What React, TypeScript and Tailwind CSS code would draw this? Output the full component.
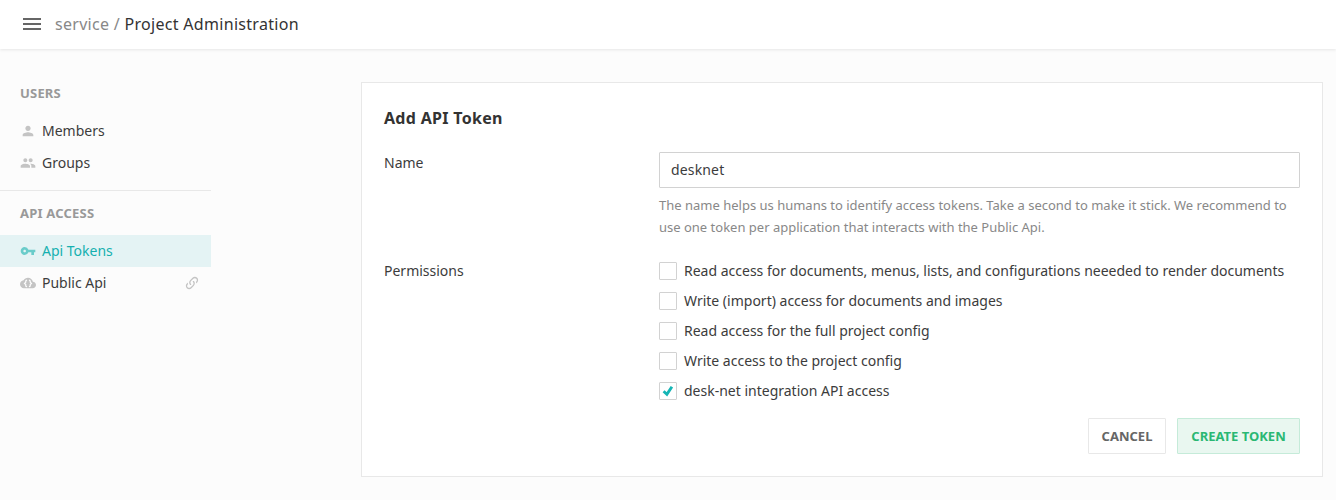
import type { ReactNode } from 'react';
import { MdPerson, MdPeople, MdVpnKey } from 'react-icons/md';

function CloudBracesIcon() {
  return (
    <svg viewBox="0 0 24 24" className="size-4" fill="currentColor">
      <path d="M19.35 10.04C18.67 6.59 15.64 4 12 4 9.11 4 6.6 5.64 5.35 8.04 2.34 8.36 0 10.91 0 14c0 3.31 2.69 6 6 6h13c2.76 0 5-2.24 5-5 0-2.64-2.05-4.78-4.65-4.96z" />
      <path
        d="M10.6 7.6Q8.6 7.8 8.6 9.6V10.8L6.8 12.6L8.6 14.4V15.6Q8.6 17.4 10.6 17.6M13.4 7.6Q15.4 7.8 15.4 9.6V10.8L17.2 12.6L15.4 14.4V15.6Q15.4 17.4 13.4 17.6"
        fill="none"
        stroke="#fcfcfc"
        strokeWidth="1.9"
      />
    </svg>
  );
}

function LinkIcon() {
  return (
    <svg viewBox="0 0 24 24" className="size-4" fill="currentColor">
      <path d="M10.59,13.41C11,13.8 11,14.44 10.59,14.83C10.2,15.22 9.56,15.22 9.17,14.83C7.22,12.88 7.22,9.71 9.17,7.76V7.76L12.71,4.22C14.66,2.27 17.83,2.27 19.78,4.22C21.73,6.17 21.73,9.34 19.78,11.29L18.29,12.78C18.3,11.96 18.17,11.14 17.89,10.36L18.36,9.88C19.54,8.71 19.54,6.81 18.36,5.64C17.19,4.46 15.29,4.46 14.12,5.64L10.59,9.17C9.41,10.34 9.41,12.24 10.59,13.41M13.41,9.17C13.8,8.78 14.44,8.78 14.83,9.17C16.78,11.12 16.78,14.29 14.83,16.24V16.24L11.29,19.78C9.34,21.73 6.17,21.73 4.22,19.78C2.27,17.83 2.27,14.66 4.22,12.71L5.71,11.22C5.7,12.04 5.83,12.86 6.11,13.65L5.64,14.12C4.46,15.29 4.46,17.19 5.64,18.36C6.81,19.54 8.71,19.54 9.88,18.36L13.41,14.83C14.59,13.66 14.59,11.76 13.41,10.59C13,10.2 13,9.56 13.41,9.17Z" />
    </svg>
  );
}

function NavItem({ icon, label, active, external }: { icon: ReactNode; label: string; active?: boolean; external?: boolean }) {
  return (
    <a className={`flex h-8 items-center pr-[11px] pl-5 text-sm ${active ? 'bg-[#e4f3f4] text-[#15b0b0]' : 'text-[#3c3c3c]'}`}>
      <span className={`mr-1.5 ${active ? 'text-[#6accca]' : 'text-[#c4c4c4]'}`}>{icon}</span>
      <span className="grow">{label}</span>
      {external && (
        <span className="text-[#c4c4c4]">
          <LinkIcon />
        </span>
      )}
    </a>
  );
}

function NavHeading({ children }: { children: ReactNode }) {
  return <h2 className="mb-[11px] pl-5 text-[13px] leading-[22px] font-bold tracking-[0.2px] text-[#999]">{children}</h2>;
}

function Checkbox({ label, checked }: { label: string; checked?: boolean }) {
  return (
    <label className="flex h-[30px] items-center gap-[7px]">
      <span className="flex size-[18px] items-center justify-center rounded-[1px] border border-[#d2d2d2] bg-white">
        {checked && (
          <svg viewBox="0 0 10 10" className="size-2.5 overflow-visible" fill="none" stroke="#15b5b5" strokeWidth="2.9">
            <path d="M0.6 5.2L3.9 8.2L8.9 0.8" />
          </svg>
        )}
      </span>
      <span>{label}</span>
    </label>
  );
}

const permissions = [
  { label: 'Read access for documents, menus, lists, and configurations neeeded to render documents' },
  { label: 'Write (import) access for documents and images' },
  { label: 'Read access for the full project config' },
  { label: 'Write access to the project config' },
  { label: 'desk-net integration API access', checked: true },
];

export default function App() {
  return (
    <div className="flex h-[500px] flex-col overflow-hidden bg-[#fcfcfc] font-['Noto_Sans',sans-serif] text-sm text-[#3c3c3c] antialiased">
      <header className="flex h-[49px] shrink-0 items-center bg-white pb-px pl-[23px] shadow-[0_1px_3px_rgba(0,0,0,0.09)]">
        <button className="mr-3.5 flex w-[18px] flex-col gap-[3px]" aria-label="Menu">
          <span className="h-0.5 bg-[#666]" />
          <span className="h-0.5 bg-[#666]" />
          <span className="h-0.5 bg-[#666]" />
        </button>
        <div className="text-base tracking-[0.3px]">
          <span className="text-[#888]">service / </span>
          <span className="text-[#333]">Project Administration</span>
        </div>
      </header>
      <div className="flex grow">
        <nav className="w-[211px] shrink-0 pt-[33px]">
          <NavHeading>USERS</NavHeading>
          <NavItem icon={<MdPerson size={16} />} label="Members" />
          <NavItem icon={<MdPeople size={16} />} label="Groups" />
          <hr className="mt-[11px] mb-[11px] border-[#e8e8e8]" />
          <NavHeading>API ACCESS</NavHeading>
          <NavItem icon={<MdVpnKey size={16} />} label="Api Tokens" active />
          <NavItem icon={<CloudBracesIcon />} label="Public Api" external />
        </nav>
        <main className="mt-[33px] ml-[150px] h-[395px] w-[962px] border border-[#e8e8e8] bg-white px-[22px] pt-6">
          <h1 className="mb-[22px] text-base leading-[23px] font-bold tracking-[0.3px] text-[#333]">Add API Token</h1>
          <div className="grid grid-cols-[275px_1fr]">
            <span className="leading-[22px]">Name</span>
            <div>
              <input
                className="block h-9 w-full rounded-[1px] border border-[#d2d2d2] bg-white px-[11px] pb-0.5 tracking-[0.15px] outline-none"
                defaultValue="desknet"
              />
              <p className="mt-1.5 text-[13px] leading-[22px] text-[#888]">
                The name helps us humans to identify access tokens. Take a second to make it stick. We recommend to use one token per
                application that interacts with the Public Api.
              </p>
            </div>
          </div>
          <div className="mt-[18px] grid grid-cols-[275px_1fr]">
            <span className="leading-[30px]">Permissions</span>
            <div>
              {permissions.map((p) => (
                <Checkbox key={p.label} label={p.label} checked={p.checked} />
              ))}
            </div>
          </div>
          <div className="mt-3 flex justify-end gap-[11px] text-[13px] font-bold">
            <button className="h-9 w-[78px] rounded-[1px] border border-[#e8e8e8] bg-white text-[#666]">CANCEL</button>
            <button className="h-9 w-[123px] rounded-[1px] border border-[#c5ebd9] bg-[#e9f7f0] text-[#2ab873]">CREATE TOKEN</button>
          </div>
        </main>
      </div>
    </div>
  );
}
